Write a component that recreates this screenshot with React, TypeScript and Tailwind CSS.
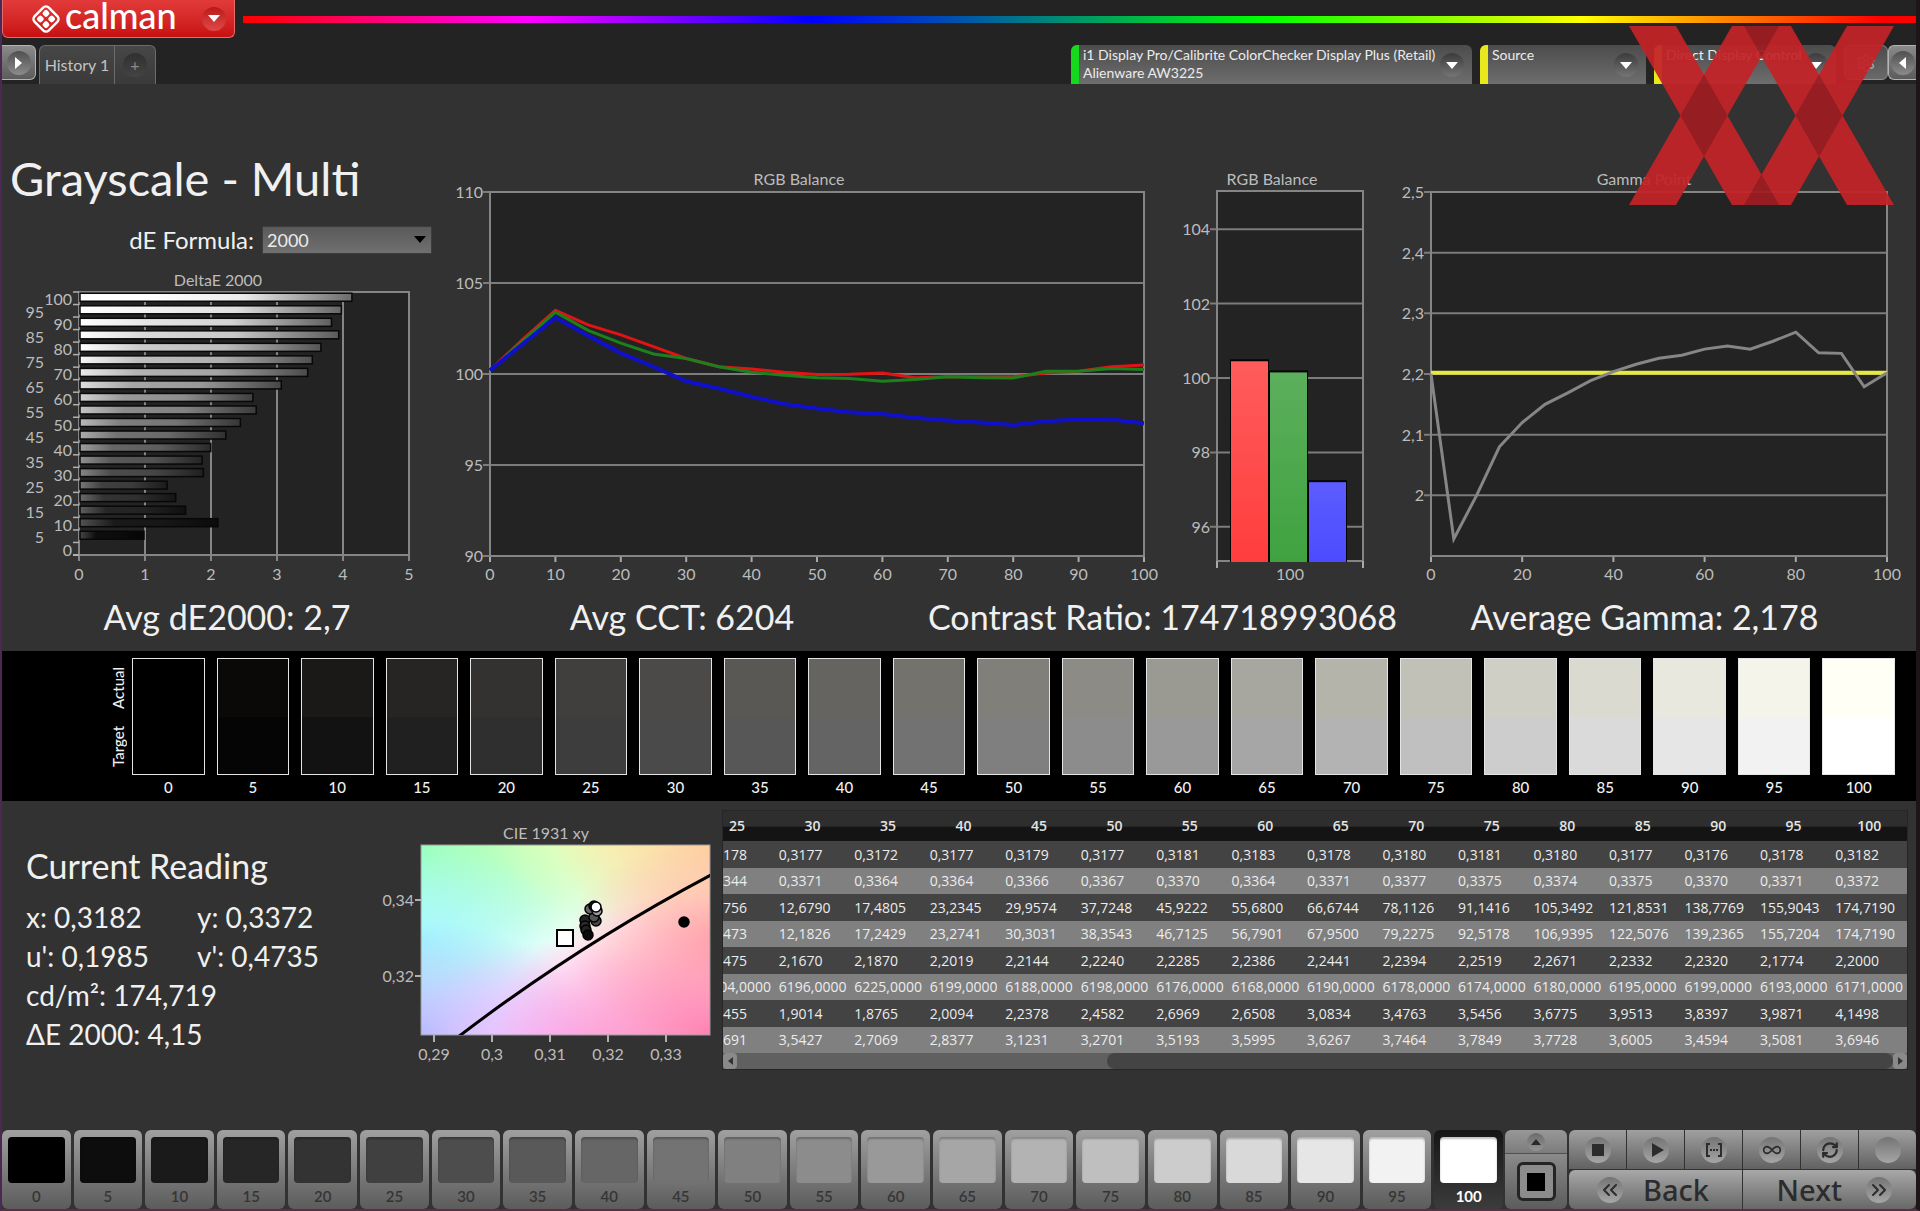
import type { ReactNode } from 'react'
import { ChevronsLeft, ChevronsRight, Infinity as InfinityIcon, RefreshCw, Settings } from 'lucide-react'

const LEVELS = Array.from({ length: 21 }, (_, i) => i * 5)

const DELTA_E = [0, 1, 2.12, 1.63, 1.48, 1.35, 1.9, 1.88, 2.01, 2.24, 2.46, 2.7, 2.65, 3.08, 3.48, 3.55, 3.68, 3.95, 3.84, 3.99, 4.15]

const RED = [100.2, 101.9, 103.5, 102.7, 102.15, 101.5, 100.85, 100.4, 100.27, 100.1, 99.97, 99.98, 100.05, 99.8, 99.85, 99.85, 99.85, 100.05, 100.15, 100.4, 100.5]
const GREEN = [100.2, 101.8, 103.4, 102.4, 101.7, 101.1, 100.85, 100.4, 100.1, 99.93, 99.8, 99.75, 99.6, 99.7, 99.85, 99.8, 99.78, 100.15, 100.15, 100.3, 100.25]
const BLUE = [100.2, 101.65, 103.1, 102.1, 101.15, 100.4, 99.6, 99.2, 98.75, 98.35, 98.1, 97.9, 97.8, 97.6, 97.45, 97.33, 97.2, 97.4, 97.5, 97.5, 97.3]
const GAMMA = [2.2, 1.928, 2.0, 2.08, 2.12, 2.15, 2.169, 2.189, 2.204, 2.216, 2.226, 2.231, 2.241, 2.246, 2.241, 2.254, 2.269, 2.235, 2.234, 2.179, 2.202]

const SWATCHES = [
  { actual: '#000000', target: '#000000' },
  { actual: '#0a0907', target: '#050505' },
  { actual: '#1a1917', target: '#121212' },
  { actual: '#262523', target: '#202020' },
  { actual: '#333230', target: '#2f2f2f' },
  { actual: '#403f3e', target: '#3d3d3d' },
  { actual: '#4b4a48', target: '#4a4a4a' },
  { actual: '#595854', target: '#575757' },
  { actual: '#656460', target: '#646464' },
  { actual: '#73726d', target: '#727272' },
  { actual: '#807f7a', target: '#7f7f7f' },
  { actual: '#8c8b86', target: '#8c8c8c' },
  { actual: '#9a9a92', target: '#999999' },
  { actual: '#a7a79f', target: '#a6a6a6' },
  { actual: '#b4b4aa', target: '#b3b3b3' },
  { actual: '#c1c1b8', target: '#c0c0c0' },
  { actual: '#cfcfc6', target: '#cdcdcd' },
  { actual: '#dadad1', target: '#dadada' },
  { actual: '#e8e8de', target: '#e6e6e6' },
  { actual: '#f4f4ea', target: '#f2f2f2' },
  { actual: '#fffff6', target: '#ffffff' },
]

const TABLE_HEAD = LEVELS.slice(5)
const TABLE_ROWS = [
  '0,3178 0,3177 0,3172 0,3177 0,3179 0,3177 0,3181 0,3183 0,3178 0,3180 0,3181 0,3180 0,3177 0,3176 0,3178 0,3182',
  '0,3344 0,3371 0,3364 0,3364 0,3366 0,3367 0,3370 0,3364 0,3371 0,3377 0,3375 0,3374 0,3375 0,3370 0,3371 0,3372',
  '8,8756 12,6790 17,4805 23,2345 29,9574 37,7248 45,9222 55,6800 66,6744 78,1126 91,1416 105,3492 121,8531 138,7769 155,9043 174,7190',
  '8,2473 12,1826 17,2429 23,2741 30,3031 38,3543 46,7125 56,7901 67,9500 79,2275 92,5178 106,9395 122,5076 139,2365 155,7204 174,7190',
  '2,1475 2,1670 2,1870 2,2019 2,2144 2,2240 2,2285 2,2386 2,2441 2,2394 2,2519 2,2671 2,2332 2,2320 2,1774 2,2000',
  '6204,0000 6196,0000 6225,0000 6199,0000 6188,0000 6198,0000 6176,0000 6168,0000 6190,0000 6178,0000 6174,0000 6180,0000 6195,0000 6199,0000 6193,0000 6171,0000',
  '1,3455 1,9014 1,8765 2,0094 2,2378 2,4582 2,6969 2,6508 3,0834 3,4763 3,5456 3,6775 3,9513 3,8397 3,9871 4,1498',
  '3,2691 3,5427 2,7069 2,8377 3,1231 3,2701 3,5193 3,5995 3,6267 3,7464 3,7849 3,7728 3,6005 3,4594 3,5081 3,6946',
].map((row) => row.split(' '))

const gray = (level: number) => {
  const v = Math.round((level / 100) * 255)
  return `rgb(${v},${v},${v})`
}

interface TickTextProps {
  x: number
  y: number
  anchor?: 'start' | 'middle' | 'end'
  children: ReactNode
}

function TickText({ x, y, anchor = 'middle', children }: TickTextProps) {
  return (
    <text x={x} y={y + 6} textAnchor={anchor} className="fill-[#bcbcbc] text-base">
      {children}
    </text>
  )
}

interface Tick {
  at: number
  label: string
}

interface LineChartProps {
  title: string
  titleX: number
  width: number
  left: number
  right: number
  min: number
  max: number
  yTicks: Tick[]
  xTicks: number[]
  series: { color: string; width: number; values: number[] }[]
}

function LineChart({ title, titleX, width, left, right, min, max, yTicks, xTicks, series }: LineChartProps) {
  const top = 22
  const bottom = 386
  const px = (level: number) => left + (level / 100) * (right - left)
  const py = (v: number) => bottom - ((v - min) / (max - min)) * (bottom - top)

  return (
    <svg viewBox={`0 0 ${width} 420`} className="block w-full overflow-visible" role="img" aria-label={title}>
      <TickText x={titleX} y={9}>{title}</TickText>
      <rect x={left} y={top} width={right - left} height={bottom - top} fill="#232323" />
      {yTicks.map((t) => (
        <g key={t.label}>
          <line x1={left - 7} x2={right} y1={py(t.at)} y2={py(t.at)} stroke="#7c7c7c" strokeWidth="2" />
          <TickText x={left - 7} y={py(t.at)} anchor="end">{t.label}</TickText>
        </g>
      ))}
      {xTicks.map((t) => (
        <g key={t}>
          <line x1={px(t)} x2={px(t)} y1={bottom} y2={bottom + 6} stroke="#a8a8a8" strokeWidth="2" />
          <TickText x={px(t)} y={404}>{t}</TickText>
        </g>
      ))}
      <rect x={left} y={top} width={right - left} height={bottom - top} fill="none" stroke="#858585" strokeWidth="2" />
      {series.map((s) => (
        <polyline
          key={s.color}
          points={s.values.map((v, i) => `${px(i * 5)},${py(v)}`).join(' ')}
          fill="none"
          stroke={s.color}
          strokeWidth={s.width}
        />
      ))}
    </svg>
  )
}

function DeltaEChart() {
  const left = 77
  const right = 407
  const top = 20
  const bottom = 283
  const row = (bottom - top) / 21
  const unit = (right - left) / 5

  return (
    <svg viewBox="0 0 438 318" className="block w-full" role="img" aria-label="DeltaE 2000">
      <defs>
        {LEVELS.map((l) => (
          <linearGradient key={l} id={`bar-${l}`}>
            <stop offset="0" stopColor={gray(Math.min(100, l + 22))} />
            <stop offset="0.25" stopColor={gray(l)} />
            <stop offset="0.6" stopColor={gray(l * 0.92)} />
            <stop offset="1" stopColor={gray(l * 0.42)} />
          </linearGradient>
        ))}
      </defs>
      <TickText x={216} y={8}>DeltaE 2000</TickText>
      <rect x={left} y={top} width={right - left} height={bottom - top} fill="#232323" />
      {[0, 1, 2, 3, 4, 5].map((n) => (
        <g key={n}>
          <line x1={left + n * unit} x2={left + n * unit} y1={top} y2={bottom + 6} stroke="#858585" strokeWidth="2" />
          <TickText x={left + n * unit} y={302}>{n}</TickText>
        </g>
      ))}
      <rect x={left} y={top} width={right - left} height={bottom - top} fill="none" stroke="#858585" strokeWidth="2" />
      {LEVELS.map((l, i) => {
        const y = bottom - row * (i + 0.5)
        return (
          <g key={l}>
            <line x1={left - 6} x2={left} y1={y - row / 2} y2={y - row / 2} stroke="#b0b0b0" strokeWidth="1.5" />
            <TickText x={i % 2 ? 42 : 70} y={y + 1} anchor="end">{l}</TickText>
            {DELTA_E[i] > 0 && (
              <rect x={left + 1} y={y - 5} width={DELTA_E[i] * unit - 2} height="8" fill={`url(#bar-${l})`} stroke="#080808" strokeWidth="1.5" />
            )}
          </g>
        )
      })}
      <line x1={left - 6} x2={left} y1={bottom} y2={bottom} stroke="#b0b0b0" strokeWidth="2" />
    </svg>
  )
}

function RgbBars() {
  const left = 67
  const right = 213
  const py = (v: number) => 208 - (v - 100) * 37.2
  const bars = [
    { x: 81, v: 100.45, from: '#ff5c5c', to: '#ff3d3d' },
    { x: 120, v: 100.15, from: '#5caf5c', to: '#3fa23f' },
    { x: 159, v: 97.2, from: '#5c5cff', to: '#4c4cff' },
  ]
  return (
    <svg viewBox="0 0 240 420" className="block w-full" role="img" aria-label="RGB Balance at 100">
      <defs>
        {bars.map((b) => (
          <linearGradient key={b.x} id={`rgb-${b.x}`} x1="0" y1="0" x2="0" y2="1">
            <stop offset="0" stopColor={b.from} />
            <stop offset="1" stopColor={b.to} />
          </linearGradient>
        ))}
      </defs>
      <TickText x={122} y={9}>RGB Balance</TickText>
      <rect x={left} y="21" width={right - left} height="370" fill="#232323" />
      {[104, 102, 100, 98, 96].map((v) => (
        <g key={v}>
          <line x1={left - 7} x2={right} y1={py(v)} y2={py(v)} stroke="#7c7c7c" strokeWidth="2" />
          <TickText x={left - 7} y={py(v)} anchor="end">{v}</TickText>
        </g>
      ))}
      <rect x={left} y="21" width={right - left} height="370" fill="none" stroke="#858585" strokeWidth="2" />
      <path d={`M${left} 391v7M${right} 391v7`} stroke="#a8a8a8" strokeWidth="2" />
      {bars.map((b) => (
        <g key={b.x}>
          <rect x={b.x - 1} y={py(b.v) - 2} width="39" height={394 - py(b.v)} fill="#050505" />
          <rect x={b.x} y={py(b.v)} width="37" height={392 - py(b.v)} fill={`url(#rgb-${b.x})`} />
        </g>
      ))}
      <TickText x={140} y={404}>100</TickText>
    </svg>
  )
}

// tints of the chromaticity diagram, each one fading out from its anchor
const CIE_TINTS = [
  { x: 0, y: 0, r: 0.8, color: '#84ffc8' },
  { x: 0.4, y: -0.25, r: 0.75, color: '#beffac' },
  { x: 0.72, y: -0.1, r: 0.5, color: '#fdffb8' },
  { x: 1.05, y: -0.05, r: 0.6, color: '#ffcc98' },
  { x: 0, y: 0.5, r: 0.5, color: '#a4f8ff' },
  { x: 0, y: 1, r: 0.6, color: '#acbcff' },
  { x: 0.5, y: 1.1, r: 0.6, color: '#fab4ff' },
  { x: 1.05, y: 0.5, r: 0.55, color: '#ffb0a4' },
  { x: 1, y: 1, r: 0.75, color: '#ff82b2' },
]

const CIE_POINTS = [
  { x: 220, y: 100, color: '#222' },
  { x: 220, y: 106, color: '#2c2c2c' },
  { x: 221, y: 110, color: '#222' },
  { x: 223, y: 115, color: '#0a0a0a' },
  { x: 231, y: 101, color: '#444' },
  { x: 229, y: 97, color: '#555' },
  { x: 225, y: 89, color: '#666' },
  { x: 232, y: 91, color: '#999' },
  { x: 229, y: 86, color: '#222' },
  { x: 231, y: 87, color: '#fff' },
  { x: 319, y: 102, color: '#000' },
]

function CieChart() {
  return (
    <svg viewBox="0 0 350 250" className="block w-full" role="img" aria-label="CIE 1931 xy">
      <defs>
        {CIE_TINTS.map((t, i) => (
          <radialGradient key={i} id={`tint-${i}`} cx={t.x} cy={t.y} r={t.r}>
            <stop offset="0" stopColor={t.color} />
            <stop offset="1" stopColor={t.color} stopOpacity="0" />
          </radialGradient>
        ))}
        <clipPath id="cie-plot">
          <rect x="56" y="25" width="289" height="190" />
        </clipPath>
      </defs>
      <TickText x={181} y={13}>CIE 1931 xy</TickText>
      <rect x="56" y="25" width="289" height="190" fill="#fff" />
      {CIE_TINTS.map((_, i) => (
        <rect key={i} x="56" y="25" width="289" height="190" fill={`url(#tint-${i})`} />
      ))}
      <rect x="56" y="25" width="289" height="190" fill="none" stroke="#9a9a9a" strokeWidth="1" />
      <g clipPath="url(#cie-plot)">
        <path d="M93 217Q212 126 346 55" fill="none" stroke="#000" strokeWidth="3" />
      </g>
      <rect x="192" y="110" width="16" height="16" fill="#fff" stroke="#000" strokeWidth="2" />
      {CIE_POINTS.map((p, i) => (
        <circle key={i} cx={p.x} cy={p.y} r="5" fill={p.color} stroke="#000" strokeWidth="1.5" />
      ))}
      <path d="M50 80h6M50 156h6" stroke="#b0b0b0" strokeWidth="2" />
      <TickText x={49} y={80} anchor="end">0,34</TickText>
      <TickText x={49} y={156} anchor="end">0,32</TickText>
      {['0,29', '0,3', '0,31', '0,32', '0,33'].map((l, i) => (
        <g key={l}>
          <line x1={69 + i * 58} x2={69 + i * 58} y1="215" y2="222" stroke="#b0b0b0" strokeWidth="2" />
          <TickText x={69 + i * 58} y={234}>{l}</TickText>
        </g>
      ))}
    </svg>
  )
}

function DownArrow({ className }: { className: string }) {
  return (
    <svg viewBox="0 0 12 7" className={className} aria-hidden="true">
      <path d="M0 0h12L6 7z" fill="currentColor" />
    </svg>
  )
}

interface DeviceTabProps {
  stripe: string
  width: string
  lines: string[]
}

function DeviceTab({ stripe, width, lines }: DeviceTabProps) {
  return (
    <button className={`flex h-[39px] justify-between overflow-hidden rounded-t-md bg-linear-to-b from-[#4c4c4c] to-[#6e6e6e] text-left ${width}`}>
      <span className={`w-2 shrink-0 self-stretch ${stripe}`} />
      <span className="min-w-0 flex-1 pt-px pl-1 text-sm leading-[18px] whitespace-nowrap text-[#ececec]">
        {lines.map((l) => (
          <span key={l} className="block">{l}</span>
        ))}
      </span>
      <span className="mt-2 mr-2 flex size-6 shrink-0 items-center justify-center rounded-full bg-linear-to-b from-[#3c3c3c] to-[#757575]">
        <DownArrow className="w-3 text-white" />
      </span>
    </button>
  )
}

function Header() {
  return (
    <header className="relative h-[84px] bg-[#232323]">
      <div className="flex h-[38px] items-center gap-2">
        <button className="flex h-full w-[233px] shrink-0 items-center justify-between rounded-b-md border border-t-0 border-[#e66a6a] bg-linear-to-b from-[#e23a3a] to-[#c80f10] pr-2 pl-7 text-white">
          <span className="flex items-center gap-1">
            <svg viewBox="0 0 30 30" className="size-[30px]" aria-hidden="true">
              <rect x="5" y="5" width="20" height="20" rx="4" transform="rotate(45 15 15)" fill="none" stroke="#fff" strokeWidth="2.5" />
              <g fill="#fff" transform="rotate(45 15 15)">
                <rect x="8" y="8" width="6" height="6" rx="2" />
                <rect x="16" y="8" width="6" height="6" rx="2" />
                <rect x="8" y="16" width="6" height="6" rx="2" />
                <rect x="16" y="16" width="6" height="6" rx="2" />
              </g>
            </svg>
            <span className="pb-2 text-4xl leading-7 font-medium">calman</span>
          </span>
          <span className="flex size-6 items-center justify-center rounded-full bg-linear-to-b from-[#b81818] to-[#e04848]">
            <DownArrow className="w-3" />
          </span>
        </button>
        <div className="h-[7px] flex-1 bg-[linear-gradient(90deg,#f00_0%,#f0f_17%,#00f_34%,#0f0_61%,#ff0_80%,#f00_98%)]" />
      </div>

      <div className="flex items-start justify-between pt-[7px]">
        <div className="flex items-start gap-[3px]">
          <button aria-label="Show panel" className="flex h-[35px] w-[34px] items-center justify-center rounded-r-md border border-l-0 border-[#b4b4b4] bg-linear-to-b from-[#8a8a8a] to-[#5c5c5c]">
            <span className="flex size-6 items-center justify-center rounded-full bg-linear-to-b from-[#505050] to-[#8c8c8c]">
              <svg viewBox="0 0 7 12" className="h-3" aria-hidden="true"><path d="M0 0v12l7-6z" fill="#fff" /></svg>
            </span>
          </button>
          <div className="flex h-[39px] rounded-t-md border border-b-0 border-[#6c6c6c] bg-linear-to-b from-[#474747] to-[#3a3a3a]">
            <button className="w-[74px] text-base text-[#c4c4c4]">History 1</button>
            <button aria-label="Add history" className="flex w-[41px] items-center justify-center border-l border-[#6c6c6c]">
              <span className="flex size-6 items-center justify-center rounded-full bg-linear-to-b from-[#303030] to-[#444] text-base text-[#8c8c8c]">+</span>
            </button>
          </div>
        </div>
        <div className="flex items-start gap-2">
          <DeviceTab stripe="bg-[#14d91c]" width="w-[401px]" lines={['i1 Display Pro/Calibrite ColorChecker Display Plus (Retail)', 'Alienware AW3225']} />
          <DeviceTab stripe="bg-[#e8e81c]" width="w-[166px]" lines={['Source']} />
          <DeviceTab stripe="bg-[#e8e81c]" width="w-[182px]" lines={['Direct Display Control']} />
          <div className="flex">
            <button aria-label="Settings" className="flex h-[35px] w-11 items-center justify-center rounded-md border border-[#909090] bg-linear-to-b from-[#4c4c4c] to-[#6a6a6a]">
              <Settings className="size-5 text-[#a0a0a0]" />
            </button>
            <button aria-label="Hide panel" className="flex h-[35px] w-7 items-center justify-center rounded-l-md border border-r-0 border-[#b4b4b4] bg-linear-to-b from-[#8a8a8a] to-[#5c5c5c]">
              <span className="flex size-6 items-center justify-center rounded-full bg-linear-to-b from-[#505050] to-[#8c8c8c]">
                <svg viewBox="0 0 7 12" className="h-3" aria-hidden="true"><path d="M7 0v12L0 6z" fill="#fff" /></svg>
              </span>
            </button>
          </div>
        </div>
      </div>

      {/* XX watermark over the page */}
      <svg viewBox="0 0 265 179" className="absolute top-[26px] right-[22px] z-10 w-[265px] opacity-93" aria-hidden="true">
        <g fill="#c42328">
          <path d="M0 0h47l103 179h-47z" />
          <path d="M103 0h47L47 179H0z" />
          <path d="M115 0h47l103 179h-47z" />
          <path d="M218 0h47L162 179h-47z" />
        </g>
        <g fill="#9e1c20">
          <path d="M75 48.500L98.500 89.500 75 130.500 51.500 89.500z" />
          <path d="M190 48.500L213.500 89.500 190 130.500 166.500 89.500z" />
          <path d="M115 0h35l-17.500 30.500z" />
          <path d="M115 179h35l-17.500-30.500z" />
        </g>
      </svg>
    </header>
  )
}

function RoundWell({ children }: { children?: ReactNode }) {
  return (
    <span className="flex size-[26px] items-center justify-center rounded-full bg-linear-to-b from-[#747474] to-[#a6a6a6] text-[#2c2c2c]">
      {children}
    </span>
  )
}

const TRANSPORT = [
  { name: 'Stop', icon: <svg viewBox="0 0 12 12" className="size-3"><path d="M0 0h12v12H0z" fill="currentColor" /></svg> },
  { name: 'Play', icon: <svg viewBox="0 0 12 14" className="ml-1 h-3.5"><path d="M0 0v14l12-7z" fill="currentColor" /></svg> },
  {
    name: 'Series',
    icon: (
      <svg viewBox="0 0 18 14" className="w-[18px]" fill="none" stroke="currentColor" strokeWidth="2">
        <path d="M5 1H2v12h3M13 1h3v12h-3" />
        <path d="M5 7h8" strokeDasharray="2 1" />
      </svg>
    ),
  },
  { name: 'Continuous', icon: <InfinityIcon className="size-5" /> },
  { name: 'Refresh', icon: <RefreshCw className="size-[18px]" strokeWidth={3} /> },
  { name: 'Blank', icon: null },
]

function Footer() {
  return (
    <footer className="flex h-[79px] gap-0.5">
      <div className="grid flex-1 grid-cols-[repeat(21,minmax(0,1fr))] gap-[3px]">
        {LEVELS.map((l) => {
          const active = l === 100
          return (
            <button
              key={l}
              className={`flex flex-col items-center gap-[3px] rounded-md bg-linear-to-b px-1.5 pt-[7px] ${active ? 'from-[#161616] to-[#3c3c3c] font-bold text-white' : 'from-[#a0a0a0] to-[#5c5c5c] font-semibold text-[#353535]'}`}
            >
              <span className="h-[46px] w-full rounded-sm shadow-[inset_0_2px_2px_rgba(0,0,0,0.25)]" style={{ backgroundColor: gray(l) }} />
              <span className="text-[15px] leading-5">{l}</span>
            </button>
          )
        })}
      </div>
      <div className="flex w-[62px] flex-col overflow-hidden rounded-md">
        <button aria-label="Expand" className="flex h-6 items-center justify-center border-b border-[#505050] bg-linear-to-b from-[#989898] to-[#7c7c7c]">
          <span className="flex size-[18px] items-center justify-center rounded-full bg-linear-to-b from-[#6c6c6c] to-[#949494]">
            <svg viewBox="0 0 10 6" className="w-2.5"><path d="M0 6h10L5 0z" fill="#2a2a2a" /></svg>
          </span>
        </button>
        <button aria-label="Pattern window" className="flex flex-1 items-center justify-center bg-linear-to-b from-[#8a8a8a] to-[#5c5c5c]">
          <span className="flex size-[39px] items-center justify-center rounded-md border-[3px] border-[#242424] bg-[#8c8c8c]">
            <span className="size-[18px] bg-black" />
          </span>
        </button>
      </div>
      <div className="flex w-[347px] flex-col gap-px">
        <div className="grid h-[39px] grid-cols-6 gap-px overflow-hidden rounded-t-md">
          {TRANSPORT.map((t) => (
            <button key={t.name} aria-label={t.name} className="flex items-center justify-center bg-linear-to-b from-[#a0a0a0] to-[#626262]">
              <RoundWell>{t.icon}</RoundWell>
            </button>
          ))}
        </div>
        <div className="grid flex-1 grid-cols-2 gap-px overflow-hidden rounded-md font-['Noto_Sans','Open_Sans',sans-serif] text-[29px] leading-9 font-medium text-[#2c2c2c]">
          <button className="flex items-center justify-start gap-5 bg-linear-to-b from-[#a8a8a8] to-[#686868] pl-7">
            <RoundWell><ChevronsLeft className="size-6" /></RoundWell>
            Back
          </button>
          <button className="flex items-center justify-end gap-6 bg-linear-to-b from-[#a8a8a8] to-[#686868] pr-6">
            Next
            <RoundWell><ChevronsRight className="size-6" /></RoundWell>
          </button>
        </div>
      </div>
    </footer>
  )
}

function ReadingsTable() {
  return (
    <div className="overflow-hidden border border-[#262626] font-['Open_Sans','Noto_Sans',sans-serif] text-sm">
      {/* scrolled to the right end, so column 25 is cut */}
      <div className="flex justify-end overflow-hidden">
        <table className="w-[102%] shrink-0 table-fixed border-collapse">
          <thead>
            <tr className="h-[30px] bg-linear-to-b from-[#2e2e2e] from-50% to-[#141414] to-55% text-[#e4e4e4]">
              {TABLE_HEAD.map((l) => (
                <th key={l} scope="col" className="p-0 font-semibold">{l}</th>
              ))}
            </tr>
          </thead>
          <tbody>
            {TABLE_ROWS.map((row, i) => (
              <tr key={i} className="leading-5 text-[#ececec] odd:h-[27px] odd:bg-[#434343] even:h-[26px] even:bg-[#808080]">
                {row.map((v, j) => (
                  <td key={j} className="p-0 pl-1 whitespace-nowrap">{v}</td>
                ))}
              </tr>
            ))}
          </tbody>
        </table>
      </div>
      <div className="flex h-4 items-center bg-[#606060]">
        <button aria-label="Scroll left" className="flex h-full w-3.5 items-center justify-center rounded-sm bg-[#8a8a8a]">
          <svg viewBox="0 0 5 8" className="h-2"><path d="M5 0v8L0 4z" fill="#333" /></svg>
        </button>
        <div className="flex h-full flex-1 justify-end">
          <div className="h-full w-[68%] rounded-full bg-[#444]" />
        </div>
        <button aria-label="Scroll right" className="flex h-full w-3.5 items-center justify-center rounded-sm bg-[#8a8a8a]">
          <svg viewBox="0 0 5 8" className="h-2"><path d="M0 0v8l5-4z" fill="#333" /></svg>
        </button>
      </div>
    </div>
  )
}

export default function App() {
  return (
    <div className="flex min-h-screen flex-col border-r-4 border-b-2 border-l-2 border-r-[#1e1516] border-b-[#583044] border-l-[#4a2a54] bg-[#323232] font-['Lato','Open_Sans',sans-serif] text-[#f0f0f0]">
      <Header />

      <main className="flex flex-1 flex-col">
        <section className="grid grid-cols-[438fr_710fr_240fr_526fr] items-end pt-[60px]">
          <div>
            <h1 className="mb-1 pl-2 text-[47px] leading-[68px]">Grayscale - Multi</h1>
            <div className="mb-[18px] flex items-center justify-end gap-2 pt-2.5 pr-2">
              <label htmlFor="formula" className="text-2xl leading-7">dE Formula:</label>
              <div className="relative w-[170px]">
                <select id="formula" className="h-7 w-full appearance-none border border-[#3c3c3c] bg-linear-to-b from-[#5a5a5a] to-[#707070] pl-1 text-lg leading-6 text-[#ececec]">
                  <option>2000</option>
                </select>
                <DownArrow className="pointer-events-none absolute top-2.5 right-1.5 w-3 text-black" />
              </div>
            </div>
            <DeltaEChart />
          </div>
          <LineChart
            title="RGB Balance"
            titleX={359}
            width={710}
            left={50}
            right={704}
            min={90}
            max={110}
            yTicks={[110, 105, 100, 95, 90].map((v) => ({ at: v, label: String(v) }))}
            xTicks={[0, 10, 20, 30, 40, 50, 60, 70, 80, 90, 100]}
            series={[
              { color: '#e01414', width: 3, values: RED },
              { color: '#1c801c', width: 3, values: GREEN },
              { color: '#1010c8', width: 4, values: BLUE },
            ]}
          />
          <RgbBars />
          <LineChart
            title="Gamma Point"
            titleX={254}
            width={526}
            left={41}
            right={497}
            min={1.9}
            max={2.5}
            yTicks={[2.5, 2.4, 2.3, 2.2, 2.1, 2].map((v) => ({ at: v, label: String(v).replace('.', ',') }))}
            xTicks={[0, 20, 40, 60, 80, 100]}
            series={[
              { color: '#e8e840', width: 4, values: LEVELS.map(() => 2.202) },
              { color: '#868686', width: 3, values: GAMMA },
            ]}
          />
        </section>

        <section className="grid grid-cols-[450fr_460fr_485fr_519fr] pb-[7px] text-center text-[34px] leading-[54px] whitespace-nowrap">
          <p>Avg dE2000: 2,7</p>
          <p>Avg CCT: 6204</p>
          <p className="min-w-0 overflow-hidden pl-4 text-left">Contrast Ratio: 174718993068</p>
          <p className="pr-6">Average Gamma: 2,178</p>
        </section>

        <section className="flex h-[150px] bg-black pt-[7px] pr-[21px]">
          <div className="flex w-[130px] shrink-0 justify-end pr-1">
            <div className="flex h-[117px] rotate-180 justify-around text-[15px] leading-5 font-medium [writing-mode:vertical-rl]">
              <span>Target</span>
              <span>Actual</span>
            </div>
          </div>
          <div className="grid flex-1 grid-cols-[repeat(21,minmax(0,1fr))] gap-3">
            {SWATCHES.map((s, i) => (
              <div key={i} className="text-center text-[15px] leading-6 font-medium">
                <div className="flex h-[117px] flex-col border border-[#e4e4e4]">
                  <div className="flex-1" style={{ backgroundColor: s.actual }} />
                  <div className="flex-1" style={{ backgroundColor: s.target }} />
                </div>
                {i * 5}
              </div>
            ))}
          </div>
        </section>

        <section className="grid flex-1 grid-cols-[363fr_350fr_7fr_1186fr_8fr] items-start">
          <div className="pt-[43px] pl-6">
            <h2 className="text-[34px] leading-[44px]">Current Reading</h2>
            <div className="grid grid-cols-[171px_1fr] pt-2.5 text-[28px] leading-[39px] whitespace-nowrap">
              <span>x: 0,3182</span>
              <span>y: 0,3372</span>
              <span>u': 0,1985</span>
              <span>v': 0,4735</span>
              <span className="col-span-2">cd/m²: 174,719</span>
              <span className="col-span-2">ΔE 2000: 4,15</span>
            </div>
          </div>
          <div className="pt-[19px]">
            <CieChart />
          </div>
          <div className="col-start-4 pt-[9px]">
            <ReadingsTable />
          </div>
        </section>
      </main>

      <Footer />
    </div>
  )
}
